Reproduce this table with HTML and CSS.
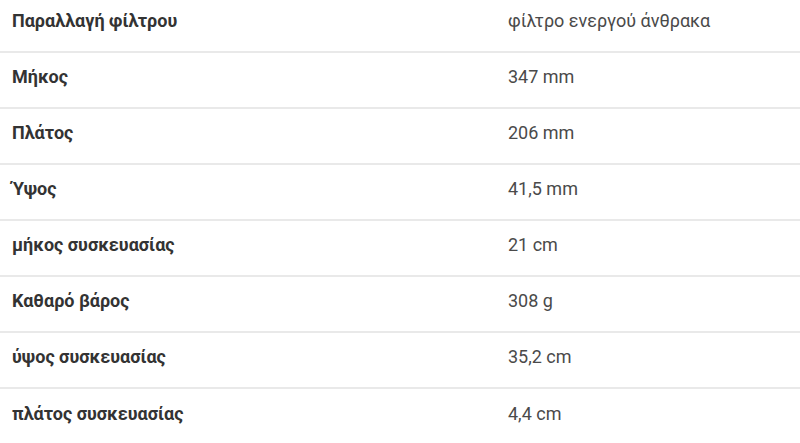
FILE: index.html
```html
<!DOCTYPE html>
<html lang="el">
<head>
<meta charset="utf-8">
<link rel="stylesheet" href="styles.css">
</head>
<body>
<div class="specs">
  <div class="row"><div class="label">Παραλλαγή φίλτρου</div><div class="value">φίλτρο ενεργού άνθρακα</div></div>
  <div class="row"><div class="label">Μήκος</div><div class="value">347 mm</div></div>
  <div class="row"><div class="label">Πλάτος</div><div class="value">206 mm</div></div>
  <div class="row"><div class="label">Ύψος</div><div class="value">41,5 mm</div></div>
  <div class="row"><div class="label">μήκος συσκευασίας</div><div class="value">21 cm</div></div>
  <div class="row"><div class="label">Καθαρό βάρος</div><div class="value">308 g</div></div>
  <div class="row"><div class="label">ύψος συσκευασίας</div><div class="value">35,2 cm</div></div>
  <div class="row"><div class="label">πλάτος συσκευασίας</div><div class="value">4,4 cm</div></div>
</div>
</body>
</html>
```
FILE: styles.css
```css
html, body {
  margin: 0;
  padding: 0;
  background: #fff;
  overflow: hidden;
}
body {
  font-family: Roboto, "Noto Sans", sans-serif;
  font-size: 18px;
  color: #333;
}
.specs {
  margin-top: -3px;
  display: flex;
  flex-direction: column;
}
.row {
  display: grid;
  grid-template-columns: 496px 1fr;
  height: 56px;
  padding-bottom: 8px;
  align-items: center;
  border-bottom: 2px solid #e9e9e9;
  box-sizing: border-box;
}
.row:last-child {
  border-bottom: none;
}
.label {
  padding-left: 12px;
  font-weight: 700;
  color: #333;
}
.value {
  padding-left: 12px;
  font-weight: 400;
  color: #4a4a4a;
}
```
